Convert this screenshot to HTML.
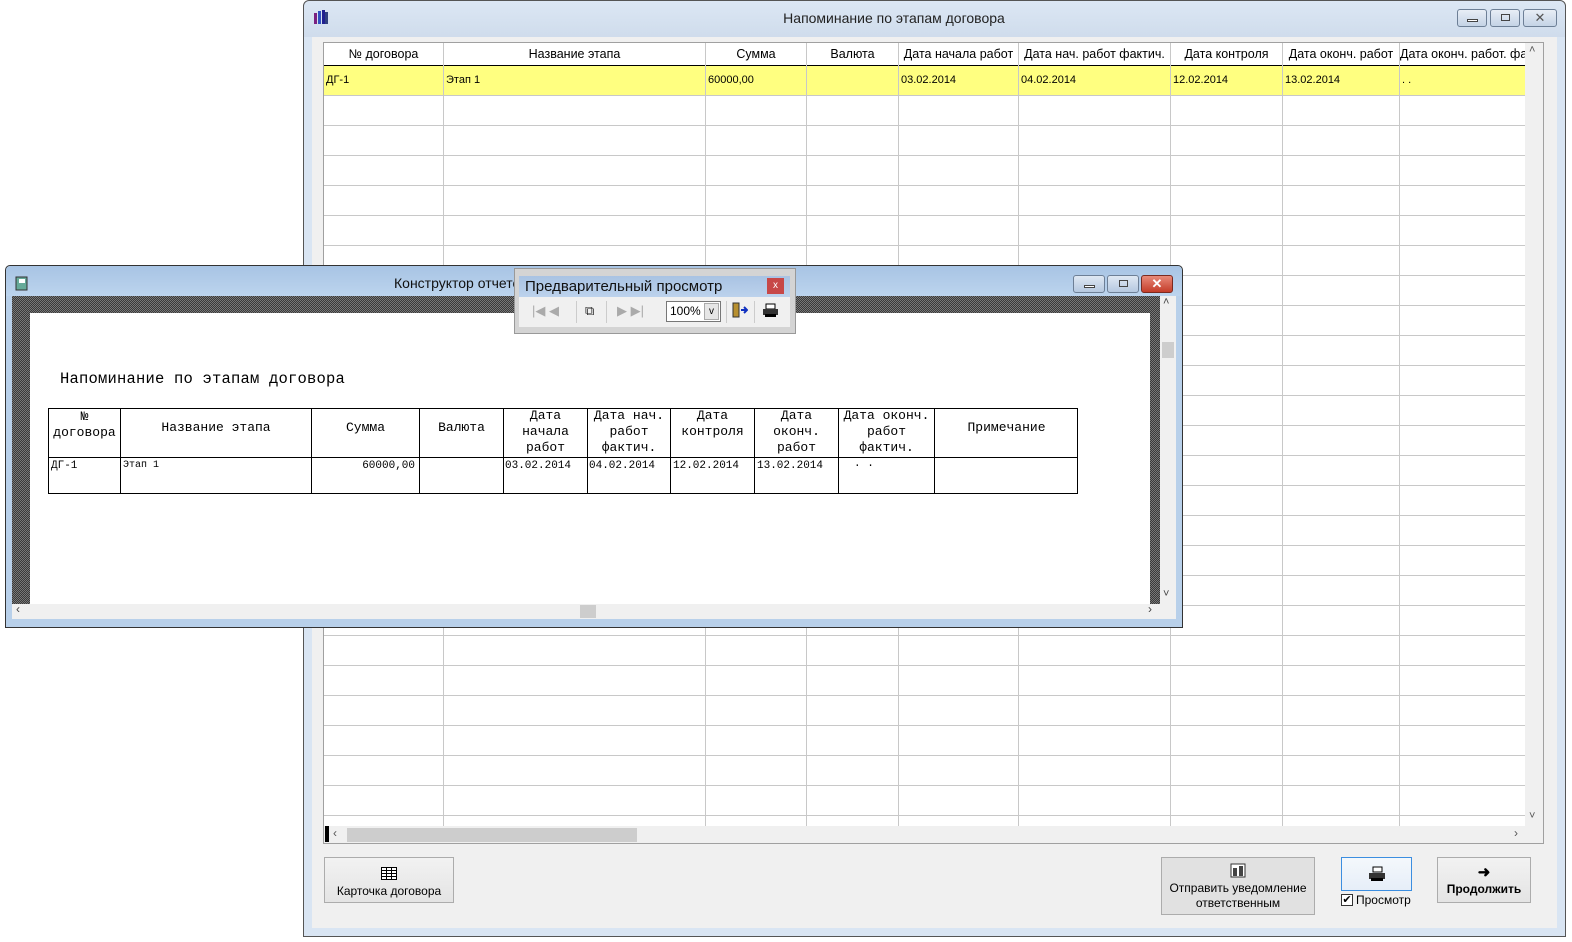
<!DOCTYPE html>
<html><head><meta charset="utf-8"><style>
*{margin:0;padding:0;box-sizing:border-box}
body{width:1572px;height:942px;background:#fff;position:relative;overflow:hidden;font-family:"Liberation Sans",sans-serif;font-size:12px;color:#000}
.a{position:absolute}
.cell{position:absolute;font-size:11px;white-space:nowrap}
.hd{position:absolute;font-size:12.5px;text-align:center;white-space:nowrap;overflow:hidden}
.vl{position:absolute;width:1px;background:#c8c8c8}
.btn{position:absolute;background:linear-gradient(#f2f2f2,#e4e4e4);border:1px solid #acacac;text-align:center;font-size:12px}
.rt{font-family:"Liberation Mono",monospace;font-size:13px}
.rt .d{font-size:11px}
.rv{position:absolute;width:1px;background:#000;top:0;bottom:0}
.wb{position:absolute;border:1px solid #6d7f96;border-radius:3px;background:linear-gradient(#e8eef6,#c4d3e6)}
</style></head><body>

<div class="a" style="left:303px;top:0;width:1263px;height:937px;border:1px solid #555;border-radius:6px 6px 0 0;background:#d9e5f3"></div>
<div class="a" style="left:304px;top:1px;width:1261px;height:36px;background:linear-gradient(#dce7f4,#cfdcec);border-radius:6px 6px 0 0"></div>
<svg class="a" style="left:313px;top:9px" width="16" height="16"><rect x="1" y="4" width="3" height="11" fill="#7a2080"/><rect x="5" y="2" width="3" height="13" fill="#3050c0"/><rect x="9" y="1" width="3" height="14" fill="#202090"/><rect x="12" y="3" width="3" height="12" fill="#304080"/></svg>
<div class="a" style="left:304px;top:10px;width:1180px;text-align:center;font-size:14px;color:#222">Напоминание по этапам договора</div>
<div class="wb" style="left:1457px;top:9px;width:30px;height:18px"><div class="a" style="left:9px;top:9px;width:11px;height:3px;border:1px solid #444;background:#fff"></div></div>
<div class="wb" style="left:1490px;top:9px;width:30px;height:18px"><div class="a" style="left:10px;top:4px;width:9px;height:7px;border:1px solid #444"></div></div>
<div class="wb" style="left:1523px;top:9px;width:34px;height:18px;text-align:center;font-size:13px;line-height:16px;color:#555">✕</div>
<div class="a" style="left:312px;top:37px;width:1245px;height:891px;background:#f0f0f0"></div>

<div class="a" style="left:323px;top:42px;width:1221px;height:802px;background:#fff;border:1px solid #a0a0a0"></div>
<div class="a" style="left:324px;top:96px;width:1201px;height:730px;background:repeating-linear-gradient(#fff 0 29px,#c8c8c8 29px 30px)"></div>
<div class="a" style="left:324px;top:65px;width:1201px;height:1px;background:#000"></div>
<div class="a" style="left:324px;top:66px;width:1201px;height:29px;background:#ffff80"></div>
<div class="a" style="left:324px;top:95px;width:1201px;height:1px;background:#c8c8c8"></div>
<div class="vl" style="left:443px;top:43px;height:783px"></div>
<div class="vl" style="left:705px;top:43px;height:783px"></div>
<div class="vl" style="left:806px;top:43px;height:783px"></div>
<div class="vl" style="left:898px;top:43px;height:783px"></div>
<div class="vl" style="left:1018px;top:43px;height:783px"></div>
<div class="vl" style="left:1170px;top:43px;height:783px"></div>
<div class="vl" style="left:1282px;top:43px;height:783px"></div>
<div class="vl" style="left:1399px;top:43px;height:783px"></div>
<div class="hd" style="left:324px;top:47px;width:119px">№ договора</div>
<div class="hd" style="left:444px;top:47px;width:261px">Название этапа</div>
<div class="hd" style="left:706px;top:47px;width:100px">Сумма</div>
<div class="hd" style="left:807px;top:47px;width:91px">Валюта</div>
<div class="hd" style="left:899px;top:47px;width:119px">Дата начала работ</div>
<div class="hd" style="left:1019px;top:47px;width:151px">Дата нач. работ фактич.</div>
<div class="hd" style="left:1171px;top:47px;width:111px">Дата контроля</div>
<div class="hd" style="left:1283px;top:47px;width:116px">Дата оконч. работ</div>
<div class="hd" style="left:1400px;top:47px;width:125px;text-align:left">Дата оконч. работ. фактич.</div>
<div class="cell" style="left:326px;top:74px">ДГ-1</div>
<div class="cell" style="left:446px;top:74px">Этап 1</div>
<div class="cell" style="left:708px;top:74px">60000,00</div>
<div class="cell" style="left:901px;top:74px">03.02.2014</div>
<div class="cell" style="left:1021px;top:74px">04.02.2014</div>
<div class="cell" style="left:1173px;top:74px">12.02.2014</div>
<div class="cell" style="left:1285px;top:74px">13.02.2014</div>
<div class="cell" style="left:1402px;top:74px">. .</div>
<div class="a" style="left:1525px;top:43px;width:18px;height:783px;background:#f0f0f0"></div>
<div class="a" style="left:1529px;top:44px;font-size:11px;color:#555">˄</div>
<div class="a" style="left:1529px;top:810px;font-size:11px;color:#555">˅</div>
<div class="a" style="left:324px;top:826px;width:1219px;height:17px;background:#f0f0f0"></div>
<div class="a" style="left:325px;top:826px;width:4px;height:16px;background:#000"></div>
<div class="a" style="left:347px;top:828px;width:290px;height:14px;background:#cdcdcd"></div>
<div class="a" style="left:333px;top:826px;font-size:12px;color:#555">‹</div>
<div class="a" style="left:1514px;top:826px;font-size:12px;color:#555">›</div>

<div class="btn" style="left:324px;top:857px;width:130px;height:46px"><svg style="margin-top:9px" width="16" height="13"><rect x="0.5" y="0.5" width="15" height="12" fill="#fff" stroke="#000"/><path d="M0 3.5H16M0 6.5H16M0 9.5H16M5.5 0V13M10.5 0V13" stroke="#000"/></svg><div style="margin-top:1px">Карточка договора</div></div>
<div class="btn" style="left:1161px;top:857px;width:154px;height:58px;background:#e1e1e1"><svg style="margin-top:4px" width="16" height="16"><rect x="1" y="2" width="14" height="13" fill="#fff" stroke="#333"/><rect x="3" y="6" width="4" height="8" fill="#444"/><rect x="9" y="4" width="4" height="10" fill="#444"/></svg><div style="line-height:15px">Отправить уведомление<br>ответственным</div></div>
<div class="btn" style="left:1341px;top:857px;width:71px;height:34px;border-color:#3c8ee0;background:linear-gradient(#f4f8fc,#e6eef8)"><svg style="margin-top:8px" width="18" height="16"><rect x="5" y="1" width="9" height="5" fill="#fff" stroke="#000"/><path d="M1 7h16v6H1z" fill="#333"/><rect x="3" y="12" width="12" height="3" fill="#000"/></svg></div>
<div class="a" style="left:1341px;top:894px;width:12px;height:12px;border:1px solid #333;background:#fff;font-size:11px;line-height:10px;text-align:center">✔</div>
<div class="a" style="left:1356px;top:893px;font-size:12px">Просмотр</div>
<div class="btn" style="left:1437px;top:857px;width:94px;height:46px"><div style="margin-top:5px;font-size:15px;font-weight:bold">➜</div><div style="font-weight:bold;margin-top:1px">Продолжить</div></div>

<div class="a" style="left:5px;top:265px;width:1178px;height:363px;border:1px solid #333;border-radius:5px 5px 0 0;background:#b8d0ea"></div>
<div class="a" style="left:6px;top:266px;width:1176px;height:30px;background:linear-gradient(#a8c4e4,#bcd4ee);border-radius:5px 5px 0 0"></div>
<svg class="a" style="left:15px;top:276px" width="14" height="15"><rect x="1" y="1" width="11" height="13" fill="#6a9" stroke="#333"/><rect x="4" y="3" width="6" height="4" fill="#fff"/></svg>
<div class="a" style="left:394px;top:275px;font-size:14px;color:#111">Конструктор отчетов</div>
<div class="wb" style="left:1073px;top:275px;width:32px;height:18px;background:linear-gradient(#dfe8f3,#b5c8e0)"><div class="a" style="left:10px;top:9px;width:11px;height:3px;border:1px solid #444;background:#fff"></div></div>
<div class="wb" style="left:1107px;top:275px;width:32px;height:18px;background:linear-gradient(#dfe8f3,#b5c8e0)"><div class="a" style="left:11px;top:4px;width:9px;height:7px;border:1px solid #444"></div></div>
<div class="wb" style="left:1141px;top:275px;width:32px;height:18px;background:linear-gradient(#e88a7a,#c43d2a);border-color:#7a2a20;color:#fff;text-align:center;font-size:13px;line-height:16px;font-weight:bold">✕</div>
<div class="a" style="left:12px;top:296px;width:1148px;height:308px;background:#555;background-image:repeating-conic-gradient(#3a3a3a 0 25%,#777 0 50%);background-size:2px 2px"></div>
<div class="a" style="left:30px;top:313px;width:1120px;height:291px;background:#fff"></div>
<div class="a" style="left:1160px;top:296px;width:16px;height:308px;background:#f0f0f0"></div>
<div class="a" style="left:1162px;top:342px;width:12px;height:16px;background:#cdcdcd"></div>
<div class="a" style="left:1163px;top:296px;font-size:11px;color:#444">˄</div>
<div class="a" style="left:1163px;top:588px;font-size:11px;color:#444">˅</div>
<div class="a" style="left:12px;top:604px;width:1164px;height:15px;background:#f0f0f0"></div>
<div class="a" style="left:580px;top:605px;width:16px;height:13px;background:#cdcdcd"></div>
<div class="a" style="left:16px;top:602px;font-size:12px;color:#444">‹</div>
<div class="a" style="left:1148px;top:602px;font-size:12px;color:#444">›</div>

<div class="a" style="left:60px;top:370px;font-family:'Liberation Mono',monospace;font-size:15.5px;letter-spacing:0.2px">Напоминание по этапам договора</div>
<div class="a rt" style="left:48px;top:408px;width:1030px;height:86px;border:1px solid #000">
 <div class="a" style="left:0;right:0;top:48px;height:1px;background:#000"></div>
 <div class="rv" style="left:71px"></div><div class="rv" style="left:262px"></div><div class="rv" style="left:370px"></div><div class="rv" style="left:454px"></div><div class="rv" style="left:538px"></div><div class="rv" style="left:621px"></div><div class="rv" style="left:705px"></div><div class="rv" style="left:789px"></div><div class="rv" style="left:885px"></div>
 <div class="a" style="left:0;width:71px;top:0;text-align:center;line-height:16px">№<br>договора</div>
 <div class="a" style="left:72px;width:190px;top:11px;text-align:center">Название этапа</div>
 <div class="a" style="left:263px;width:107px;top:11px;text-align:center">Сумма</div>
 <div class="a" style="left:371px;width:83px;top:11px;text-align:center">Валюта</div>
 <div class="a" style="left:455px;width:83px;top:-1px;text-align:center;line-height:16px">Дата<br>начала<br>работ</div>
 <div class="a" style="left:539px;width:82px;top:-1px;text-align:center;line-height:16px">Дата нач.<br>работ<br>фактич.</div>
 <div class="a" style="left:622px;width:83px;top:-1px;text-align:center;line-height:16px">Дата<br>контроля</div>
 <div class="a" style="left:706px;width:83px;top:-1px;text-align:center;line-height:16px">Дата<br>оконч.<br>работ</div>
 <div class="a" style="left:790px;width:95px;top:-1px;text-align:center;line-height:16px">Дата оконч.<br>работ<br>фактич.</div>
 <div class="a" style="left:886px;width:143px;top:11px;text-align:center">Примечание</div>
 <div class="a d" style="left:2px;top:51px">ДГ-1</div>
 <div class="a d" style="left:74px;top:51px;font-size:10px">Этап 1</div>
 <div class="a d" style="left:263px;width:103px;top:51px;text-align:right">60000,00</div>
 <div class="a d" style="left:456px;top:51px">03.02.2014</div>
 <div class="a d" style="left:540px;top:51px">04.02.2014</div>
 <div class="a d" style="left:624px;top:51px">12.02.2014</div>
 <div class="a d" style="left:708px;top:51px">13.02.2014</div>
 <div class="a d" style="left:805px;top:49px">.  .</div>
</div>

<div class="a" style="left:514px;top:268px;width:282px;height:66px;background:#d4d4d4;border:1px solid #999"></div>
<div class="a" style="left:519px;top:276px;width:271px;height:21px;background:linear-gradient(#a9c3e3,#bcd2ec)"></div>
<div class="a" style="left:525px;top:278px;font-size:15px;color:#111">Предварительный просмотр</div>
<div class="a" style="left:767px;top:278px;width:17px;height:16px;background:#c74848;color:#fff;font-size:10px;text-align:center;line-height:15px">x</div>
<div class="a" style="left:519px;top:297px;width:271px;height:30px;background:#f0f0f0"></div>
<div class="a" style="left:532px;top:303px;font-size:13px;color:#aaa">|◀ ◀</div>
<div class="a" style="left:576px;top:301px;width:1px;height:22px;background:#ccc"></div>
<div class="a" style="left:585px;top:303px;font-size:13px;color:#222">⧉</div>
<div class="a" style="left:606px;top:301px;width:1px;height:22px;background:#ccc"></div>
<div class="a" style="left:617px;top:303px;font-size:13px;color:#aaa">▶ ▶|</div>
<div class="a" style="left:666px;top:301px;width:55px;height:21px;border:1px solid #777;background:#fff;font-size:12px;padding:2px 3px">100%</div>
<div class="a" style="left:704px;top:303px;width:15px;height:17px;border:1px solid #aaa;background:#e6e6e6;font-size:10px;text-align:center;line-height:16px">v</div>
<div class="a" style="left:726px;top:301px;width:1px;height:22px;background:#ccc"></div>
<svg class="a" style="left:732px;top:302px" width="16" height="16"><rect x="1" y="1" width="6" height="14" fill="#b89030" stroke="#333"/><path d="M9 8h6M12 5l3 3-3 3" stroke="#1030c0" stroke-width="2" fill="none"/></svg>
<div class="a" style="left:754px;top:301px;width:1px;height:22px;background:#ccc"></div>
<svg class="a" style="left:762px;top:303px" width="17" height="15"><rect x="4" y="1" width="9" height="5" fill="#fff" stroke="#000"/><path d="M1 6h15v6H1z" fill="#333"/><rect x="3" y="11" width="11" height="3" fill="#000"/></svg>
</body></html>
